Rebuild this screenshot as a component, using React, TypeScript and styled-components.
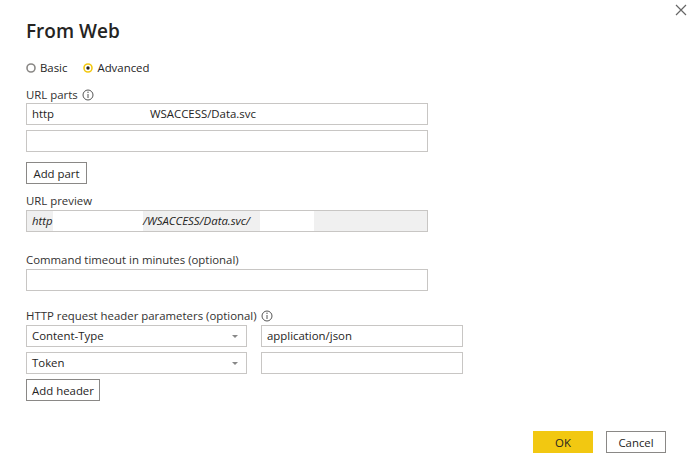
import React from 'react';
import styled, { createGlobalStyle } from 'styled-components';

const GlobalStyle = createGlobalStyle`
  body {
    margin: 0;
    background: #fff;
    font-family: "Open Sans", "Noto Sans", sans-serif;
    color: #252423;
  }
`;

const Dialog = styled.div`
  position: relative;
  width: 693px;
  height: 470px;
  box-sizing: border-box;
  padding: 0 26px;
  background: #fff;
  display: flex;
  flex-direction: column;
  font-size: 11.4px;
`;

const CloseButton = styled.div`
  position: absolute;
  top: 4px;
  right: 6px;
  width: 12px;
  height: 12px;
`;

const Title = styled.h1`
  margin: 16px 0 0;
  height: 30px;
  line-height: 30px;
  font-size: 19px;
  font-weight: 600;
  color: #252423;
`;

const RadioRow = styled.div`
  margin-top: 14px;
  height: 16px;
  display: flex;
  align-items: center;
  gap: 16px;
`;

const RadioOption = styled.label`
  display: flex;
  align-items: center;
  gap: 4px;
  line-height: 16px;
  color: #252423;
`;

const Label = styled.div<{ $top: number }>`
  margin-top: ${p => p.$top}px;
  margin-bottom: 1px;
  height: 16px;
  padding-top: 1px;
  box-sizing: border-box;
  line-height: 16px;
  display: flex;
  align-items: center;
  gap: 4px;
  color: #323130;
`;

const Field = styled.div<{ $width?: number; $top?: number; $gray?: boolean; $italic?: boolean }>`
  margin-top: ${p => p.$top ?? 0}px;
  width: ${p => p.$width ?? 402}px;
  height: 22px;
  flex-shrink: 0;
  box-sizing: border-box;
  border: 1px solid #c8c6c4;
  background: ${p => (p.$gray ? '#f0f0f0' : '#fff')};
  display: flex;
  align-items: stretch;
  padding-left: 5px;
  line-height: 20px;
  font-style: ${p => (p.$italic ? 'italic' : 'normal')};
  color: #252423;
  overflow: hidden;
  white-space: nowrap;
`;

const Segment = styled.span<{ $width?: number; $blank?: boolean }>`
  display: inline-block;
  width: ${p => (p.$width ? `${p.$width}px` : 'auto')};
  background: ${p => (p.$blank ? '#fff' : 'transparent')};
  flex-shrink: 0;
`;

const Select = styled(Field)`
  position: relative;
  padding-right: 10px;
`;

const Caret = styled.span`
  position: absolute;
  right: 8px;
  top: 9px;
  width: 0;
  height: 0;
  border-left: 3px solid transparent;
  border-right: 3px solid transparent;
  border-top: 3px solid #888;
`;

const HeaderRow = styled.div<{ $top: number }>`
  margin-top: ${p => p.$top}px;
  display: flex;
  gap: 14px;
`;

const Button = styled.button<{ $top?: number; $primary?: boolean; $width: number }>`
  margin-top: ${p => p.$top ?? 0}px;
  align-self: flex-start;
  height: 22px;
  width: ${p => p.$width}px;
  padding: 0;
  box-sizing: border-box;
  font-family: inherit;
  font-size: 11.4px;
  color: #252423;
  background: ${p => (p.$primary ? '#f2c811' : '#fff')};
  border: 1px solid ${p => (p.$primary ? '#f2c811' : '#8a8886')};
  cursor: pointer;
`;

const Footer = styled.div`
  margin-top: 30px;
  margin-right: 1px;
  display: flex;
  justify-content: flex-end;
  gap: 13px;
`;

const InfoIcon = () => (
  <svg width="12" height="12" viewBox="0 0 12 12">
    <circle cx="6" cy="6" r="5" fill="none" stroke="#555" strokeWidth="1" />
    <line x1="6" y1="5" x2="6" y2="9" stroke="#555" strokeWidth="1" />
    <circle cx="6" cy="3.3" r="0.7" fill="#555" />
  </svg>
);

const Radio = ({ checked }: { checked?: boolean }) => (
  <svg width="10" height="10" viewBox="0 0 10 10">
    <circle cx="5" cy="5" r="4" fill="#fff" stroke={checked ? '#f2c811' : '#8a8886'} strokeWidth="1.6" />
    {checked && <circle cx="5" cy="5" r="1.7" fill="#252423" />}
  </svg>
);

const App: React.FC = () => {
  return (
    <Dialog>
      <GlobalStyle />
      <CloseButton>
        <svg width="12" height="12" viewBox="0 0 12 12">
          <path d="M1 1 L11 11 M11 1 L1 11" stroke="#666" strokeWidth="1.2" />
        </svg>
      </CloseButton>

      <Title>From Web</Title>

      <RadioRow>
        <RadioOption>
          <Radio /> Basic
        </RadioOption>
        <RadioOption>
          <Radio checked /> Advanced
        </RadioOption>
      </RadioRow>

      <Label $top={10}>
        URL parts <InfoIcon />
      </Label>
      <Field>
        <Segment $width={118}>http</Segment>
        <Segment>WSACCESS/Data.svc</Segment>
      </Field>
      <Field $top={5} />
      <Button $top={10} $width={61}>
        Add part
      </Button>

      <Label $top={8}>URL preview</Label>
      <Field $gray $italic $top={1}>
        <Segment $width={21}>http</Segment>
        <Segment $width={90} $blank />
        <Segment $width={117}>/WSACCESS/Data.svc/</Segment>
        <Segment $width={54} $blank />
      </Field>

      <Label $top={19}>Command timeout in minutes (optional)</Label>
      <Field $top={1} />

      <Label $top={16}>
        HTTP request header parameters (optional) <InfoIcon />
      </Label>
      <HeaderRow $top={1}>
        <Select $width={221}>
          Content-Type
          <Caret />
        </Select>
        <Field $width={202}>application/json</Field>
      </HeaderRow>
      <HeaderRow $top={5}>
        <Select $width={221}>
          Token
          <Caret />
        </Select>
        <Field $width={202} />
      </HeaderRow>
      <Button $top={5} $width={74}>
        Add header
      </Button>

      <Footer>
        <Button $primary $width={60}>
          OK
        </Button>
        <Button $width={60}>Cancel</Button>
      </Footer>
    </Dialog>
  );
};

export default App;
